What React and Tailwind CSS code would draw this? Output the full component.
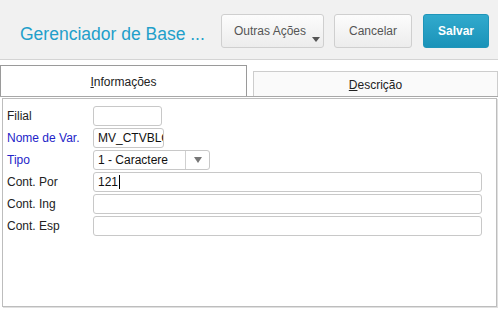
import React from 'react';

const font = { fontFamily: '"Liberation Sans", Arial, sans-serif' };

const Field = ({ label, blue, children }) => (
    <div className="flex items-center h-[20px] mb-[2px]">
        <div className={`w-[86px] text-[12px] ${blue ? 'text-[#2323c8]' : 'text-[#222]'}`}>{label}</div>
        {children}
    </div>
);

const Input = ({ w, value, cursor }) => (
    <div className={`${w} h-[20px] border border-[#c8c8c8] rounded-[3px] bg-white flex items-center px-[4px] overflow-hidden text-[12px] text-[#111] whitespace-nowrap`}>
        {value}
        {cursor && <span className="inline-block w-px h-[14px] bg-black ml-[1px]"></span>}
    </div>
);

const App = () => {
    return (
        <main className="w-[498px] h-[309px] bg-white overflow-hidden relative" style={font}>
            {/* header */}
            <header className="h-[60px] bg-[#f1f1f1] border-b border-[#d4d4d4] flex items-start pt-[14px] pl-[20px] pr-[9px]">
                <div className="flex-1 text-[17.5px] text-[#229fca] mt-[7px]">Gerenciador de Base ...</div>
                <button className="relative w-[103px] h-[34px] rounded-[3px] border border-[#cfcfcf] bg-gradient-to-b from-[#fcfcfc] to-[#ececec] text-[12px] text-[#555] text-left pl-[12px]">
                    <span className="block">Outras Ações</span>
                    <span className="absolute right-[3px] bottom-[5px] w-0 h-0 border-l-[4px] border-r-[4px] border-t-[5px] border-l-transparent border-r-transparent border-t-[#555]"></span>
                </button>
                <button className="ml-[10px] w-[78px] h-[34px] rounded-[3px] border border-[#cfcfcf] bg-gradient-to-b from-[#fcfcfc] to-[#ececec] text-[12px] text-[#555]">
                    Cancelar
                </button>
                <button className="ml-[11px] w-[66px] h-[34px] rounded-[3px] border border-[#1f95b9] bg-gradient-to-b from-[#31aacd] to-[#1a93b9] text-[12px] font-bold text-white">
                    Salvar
                </button>
            </header>

            {/* tabs */}
            <div className="flex items-end mt-[5px] h-[31px]">
                <div className="w-[247px] h-[31px] border border-b-0 border-[#9a9a9a] bg-white flex items-center justify-center text-[12px] text-[#222] pt-[1px]">
                    <span><u>I</u>nformações</span>
                </div>
                <div className="ml-[6px] flex-1 h-[25px] border border-b-0 border-[#cdcdcd] bg-[#fafafa] flex items-center justify-center text-[12px] text-[#222] pt-[2px]">
                    <span><u>D</u>escrição</span>
                </div>
            </div>

            {/* panel */}
            <div className="border-t border-[#a8a8a8]">
                <div className="ml-[2px] mt-[1px] w-[495px] h-[209px] border border-[#bdbdbd] shadow-[1px_1px_0_#e0e0e0] pt-[7px] pl-[4px]">
                    <Field label="Filial"><Input w="w-[69px]" value="" /></Field>
                    <Field label="Nome de Var." blue><Input w="w-[71px]" value="MV_CTVBLCT" /></Field>
                    <Field label="Tipo" blue>
                        <div className="w-[117px] h-[20px] border border-[#c8c8c8] rounded-[3px] bg-white flex items-center text-[12px] text-[#111]">
                            <div className="w-[92px] px-[4px] border-r border-[#d0d0d0] h-full flex items-center">1 - Caractere</div>
                            <div className="flex-1 flex items-center justify-center">
                                <span className="w-0 h-0 border-l-[4px] border-r-[4px] border-t-[6px] border-l-transparent border-r-transparent border-t-[#777]"></span>
                            </div>
                        </div>
                    </Field>
                    <Field label="Cont. Por"><Input w="w-[389px]" value="121" cursor /></Field>
                    <Field label="Cont. Ing"><Input w="w-[389px]" value="" /></Field>
                    <Field label="Cont. Esp"><Input w="w-[389px]" value="" /></Field>
                </div>
            </div>
        </main>
    );
};

export default App;
